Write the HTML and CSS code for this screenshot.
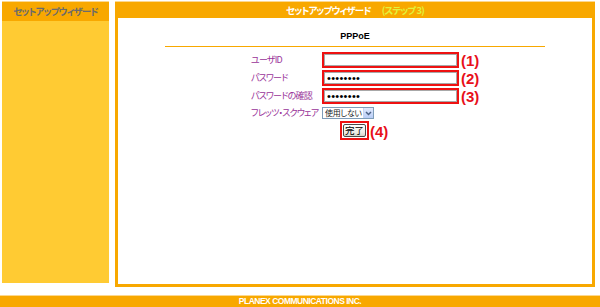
FILE: index.html
```html
<!DOCTYPE html>
<html lang="ja">
<head>
<meta charset="utf-8">
<title>セットアップウィザード</title>
<link rel="stylesheet" href="styles.css">
</head>
<body>
<div class="page">
  <div class="main">
    <aside class="side">
      <div class="side-head">セットアップウィザード</div>
      <div class="side-body"></div>
    </aside>
    <section class="panel">
      <div class="panel-head"><span>セットアップウィザード</span><span class="step">(ステップ 3)</span></div>
      <div class="panel-body">
        <h1 class="title">PPPoE</h1>
        <div class="rule"></div>
        <form class="form">
          <label class="lbl">ユーザID</label>
          <div class="mark"><input class="txt" type="text"><span class="num">(1)</span></div>
          <label class="lbl">パスワード</label>
          <div class="mark"><input class="txt pw" type="password" value="12345678"><span class="num">(2)</span></div>
          <label class="lbl">パスワードの確認</label>
          <div class="mark"><input class="txt pw" type="password" value="12345678"><span class="num">(3)</span></div>
          <label class="lbl">フレッツ・スクウェア</label>
          <div class="selcell">
            <span class="selwrap">
              <select class="sel"><option>使用しない</option><option>使用する</option></select>
              <span class="arrow"><svg width="7" height="5" viewBox="0 0 7 5"><path d="M1 1 L3.5 3.5 L6 1" fill="none" stroke="#4d6185" stroke-width="1.5"/></svg></span>
            </span>
          </div>
          <div></div>
          <div class="btncell"><span class="mark btnmark"><button class="btn" type="button">完了</button><span class="num num4">(4)</span></span></div>
        </form>
      </div>
    </section>
  </div>
  <footer class="foot">PLANEX COMMUNICATIONS INC.</footer>
</div>
</body>
</html>
```

FILE: styles.css
```css
html, body {
  margin: 0;
  padding: 0;
  background: #fff;
}
body {
  font-family: "Noto Sans CJK JP", "Liberation Sans", sans-serif;
  font-feature-settings: "palt";
}
.page {
  width: 600px;
  height: 307px;
  display: flex;
  flex-direction: column;
}
.main {
  display: flex;
  align-items: flex-start;
  gap: 6px;
  padding: 1px 0 0 2px;
}
.side {
  width: 107px;
  border-top: 1px solid #fcd88f;
  display: flex;
  flex-direction: column;
}
.side-head {
  height: 19px;
  background: #f8a800;
  color: #6b6b6b;
  font-weight: bold;
  font-size: 9.5px;
  letter-spacing: -0.9px;
  line-height: 19px;
  text-align: center;
}
.side-body {
  height: 262px;
  background: #ffcb33;
}
.panel {
  width: 480px;
  border-top: 1px solid #fcd88f;
  display: flex;
  flex-direction: column;
}
.panel-head {
  height: 16px;
  background: #f8a800;
  color: #fff;
  font-weight: bold;
  font-size: 9.5px;
  letter-spacing: -0.9px;
  line-height: 16px;
  display: flex;
  justify-content: center;
  gap: 11px;
}
.step {
  color: #e2f23c;
}
.panel-body {
  height: 266px;
  border: 3px solid #f8a800;
  border-top: 0;
  background: #fff;
  display: flex;
  flex-direction: column;
  align-items: center;
}
.title {
  margin: 0;
  padding-top: 12px;
  font-family: "Liberation Sans", sans-serif;
  font-size: 9px;
  line-height: 12px;
  font-weight: bold;
  color: #000;
}
.rule {
  width: 380px;
  height: 1px;
  background: #f8a800;
  margin-top: 4px;
}
.form {
  margin: 5px 0 0;
  display: grid;
  grid-template-columns: 71px 137px;
  row-gap: 2px;
  align-items: center;
}
.lbl {
  color: #993399;
  font-size: 9px;
  letter-spacing: -0.8px;
  line-height: 12px;
  white-space: nowrap;
}
.mark {
  position: relative;
  border: 2px solid #ee1111;
  box-sizing: border-box;
  height: 16px;
  display: flex;
}
.txt {
  box-sizing: border-box;
  width: 100%;
  height: 12px;
  margin: 0;
  padding: 0 2px;
  border: 1px solid #a8a8a8;
  font-size: 9px;
  font-family: "Liberation Sans", sans-serif;
  outline: none;
  background: #fff;
}
.pw {
  font-size: 11px;
  letter-spacing: 0.3px;
  line-height: 10px;
}
.num {
  position: absolute;
  left: calc(100% + 4px);
  top: 50%;
  transform: translateY(-50%);
  color: #e8101a;
  font-family: "Liberation Sans", sans-serif;
  font-weight: bold;
  font-size: 15px;
  line-height: 15px;
  white-space: nowrap;
}
.num4 {
  left: calc(100% + 3px);
}
.selcell {
  display: flex;
  margin-top: 1px;
}
.selwrap {
  position: relative;
  display: flex;
  width: 52px;
  height: 12px;
}
.sel {
  appearance: none;
  -webkit-appearance: none;
  display: block;
  box-sizing: border-box;
  width: 52px;
  height: 12px;
  margin: 0;
  padding: 0 0 0 2px;
  border: 1px solid #7f9db9;
  background: #fff;
  color: #222;
  font-family: "Noto Sans CJK JP", sans-serif;
  font-feature-settings: "palt";
  font-size: 8px;
  letter-spacing: -0.3px;
  line-height: 10px;
  border-radius: 0;
}
.arrow {
  position: absolute;
  right: 1px;
  top: 1px;
  width: 9px;
  height: 10px;
  background: linear-gradient(#e0e9fd, #b9cdf6);
  border-left: 1px solid #c7d5f2;
  display: flex;
  align-items: center;
  justify-content: center;
  pointer-events: none;
}
.btncell {
  display: flex;
}
.btnmark {
  margin-left: 18px;
  height: 19px;
  width: 29px;
  padding: 1px;
}
.btn {
  box-sizing: border-box;
  width: 23px;
  height: 13px;
  margin: 0;
  padding: 0;
  border: 1px solid #4a4a4a;
  border-radius: 2px;
  background: linear-gradient(#ffffff, #ecebe3 70%, #d6d4c8);
  font-family: "Noto Sans CJK JP", sans-serif;
  font-size: 9.5px;
  line-height: 11px;
  color: #000;
}
.foot {
  margin-top: 8px;
  height: 11px;
  border-top: 1px solid #fcd88f;
  background: #f8a800;
  color: #fff;
  font-family: "Liberation Sans", sans-serif;
  font-weight: bold;
  font-size: 8.5px;
  letter-spacing: -0.5px;
  line-height: 11px;
  text-align: center;
}
```
